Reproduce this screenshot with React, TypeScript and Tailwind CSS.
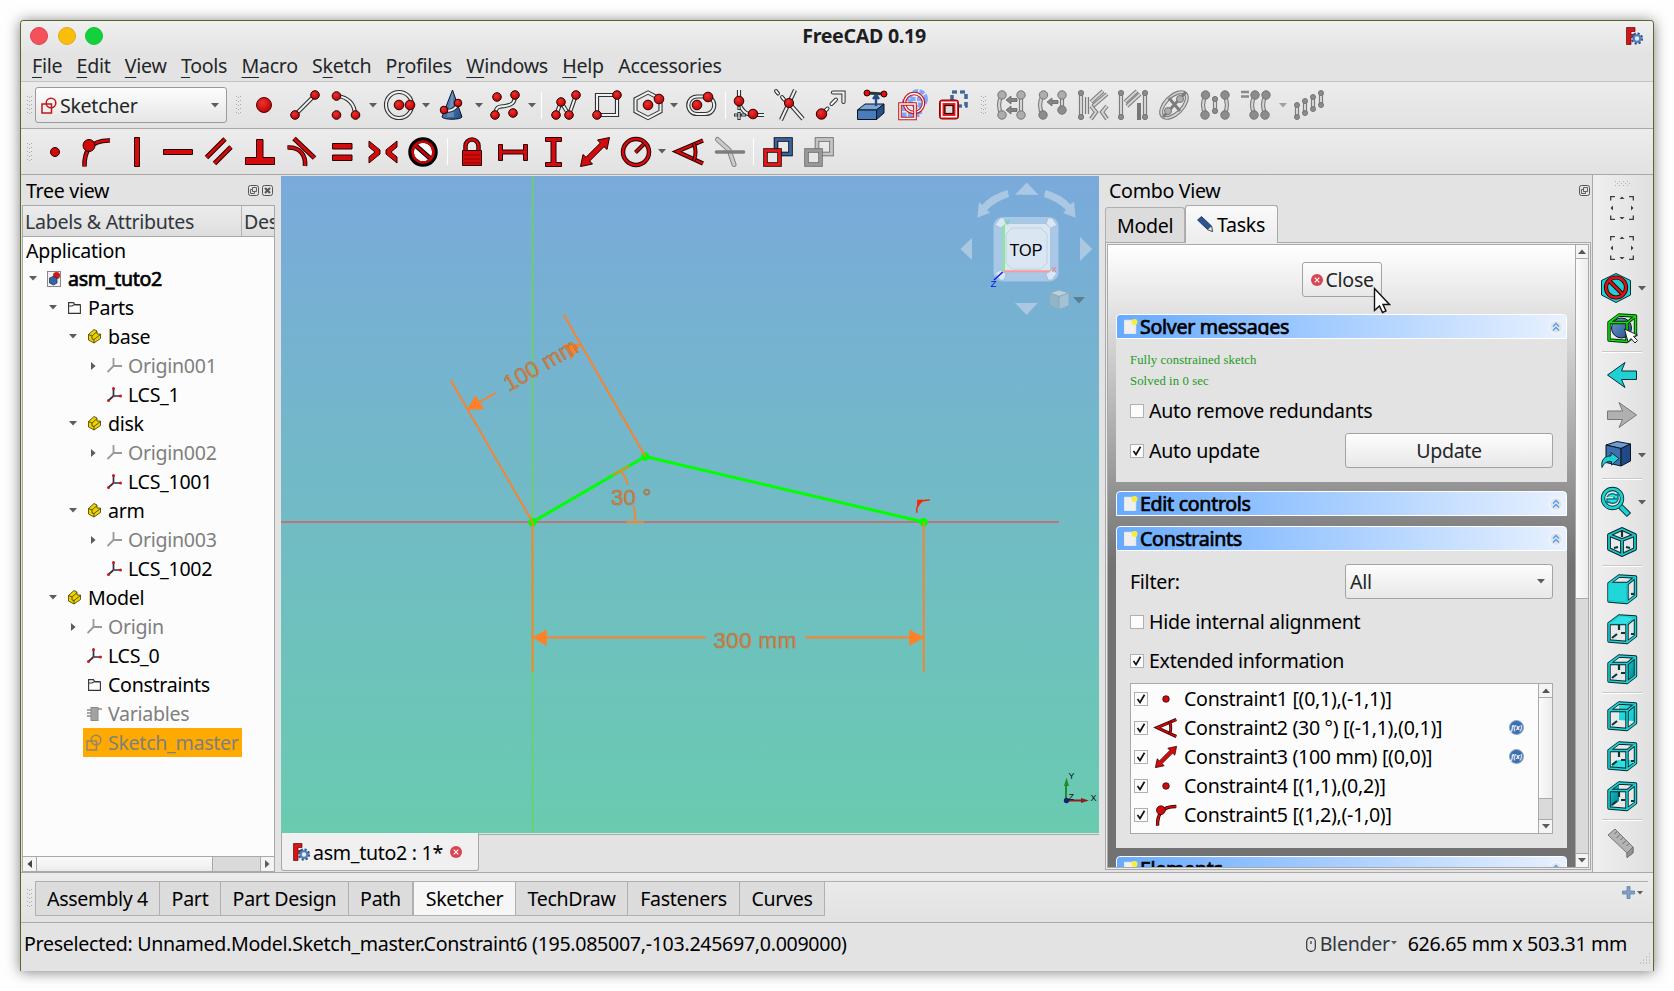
import React from "react";

type Kids = { children?: React.ReactNode };

/* ---------- drawing primitives ---------- */

function Ico({ children, s = 30 }: Kids & { s?: number }) {
  return (
    <svg width={s} height={s} viewBox="0 0 30 30" fill="none" className="shrink-0 overflow-visible">
      {children}
    </svg>
  );
}

function Tube({ d, dash, gray }: { d: string; dash?: string; gray?: boolean }) {
  return (
    <>
      <path d={d} stroke={gray ? "#7c7c7c" : "#2e3436"} strokeWidth="4.2" strokeDasharray={dash} />
      <path d={d} stroke={gray ? "#d4d4d4" : "#f1f1ef"} strokeWidth="2" strokeDasharray={dash} />
    </>
  );
}

function Dot({ x, y, r = 4.3 }: { x: number; y: number; r?: number }) {
  return <circle cx={x} cy={y} r={r} fill="url(#redDot)" stroke="#280000" strokeWidth="1" />;
}

function GDot({ x, y, r = 4.2, dark }: { x: number; y: number; r?: number; dark?: boolean }) {
  return <circle cx={x} cy={y} r={r} fill={dark ? "#8c8c8c" : "#adadad"} stroke="#757575" strokeWidth="1" />;
}

function Red({ d, w = 5.4 }: { d: string; w?: number }) {
  return (
    <>
      <path d={d} stroke="#280000" strokeWidth={w} />
      <path d={d} stroke="#d40b0b" strokeWidth={w - 2} />
    </>
  );
}

function Defs() {
  return (
    <svg width="0" height="0" className="absolute">
      <defs>
        <radialGradient id="redDot" cx="0.4" cy="0.35" r="0.7">
          <stop offset="0" stopColor="#f03030" />
          <stop offset="1" stopColor="#b80000" />
        </radialGradient>
        <linearGradient id="blueBox" x1="0" y1="0" x2="1" y2="1">
          <stop offset="0" stopColor="#729fcf" />
          <stop offset="1" stopColor="#204a87" />
        </linearGradient>
        <linearGradient id="tealFace" x1="0" y1="0" x2="1" y2="1">
          <stop offset="0" stopColor="#34e0e2" />
          <stop offset="1" stopColor="#16c8cc" />
        </linearGradient>
        <linearGradient id="tealDark" x1="0" y1="0" x2="1" y2="1">
          <stop offset="0" stopColor="#16d0d2" />
          <stop offset="1" stopColor="#067a80" />
        </linearGradient>
      </defs>
    </svg>
  );
}

/* ---------- geometry toolbar icons ---------- */

const GeoPoint = () => <Ico><circle cx="15" cy="15" r="7.5" fill="url(#redDot)" stroke="#500" strokeWidth="1" /></Ico>;
const GeoLine = () => <Ico><Tube d="M5 25 25 5" /><Dot x={5} y={25} /><Dot x={25} y={5} /></Ico>;
const GeoArc = () => <Ico><Tube d="M6 6C17 7 24 14 24 25" /><Dot x={5.5} y={6} /><Dot x={5.5} y={25} /><Dot x={24.5} y={25} /></Ico>;
const GeoCircle = () => <Ico><Tube d="M28 15a13 13 0 1 1-26 0a13 13 0 0 1 26 0" /><Dot x={15} y={15} r={4.8} /><Dot x={26} y={15} r={4.8} /></Ico>;
const GeoConic = () => (
  <Ico>
    <path d="M15.500 0 25 27C23 30 7 30 5 27Z" fill="url(#blueBox)" stroke="#0b1521" />
    <path d="M15.500 2 17 27H10Z" fill="#8fb4dd" opacity=".45" />
    <Tube d="M7 20C12 22 19 20 21 13" />
    <Dot x={7} y={20} r={3.8} /><Dot x={21} y={13} r={3.8} />
  </Ico>
);
const GeoSpline = () => <Ico><Tube d="M5 25C6 15 10 17 15 16C22 15 25 13 25 5" /><Dot x={7} y={7} /><Dot x={25} y={5} /><Dot x={5} y={25} /><Dot x={23} y={23} /></Ico>;
const GeoPolyline = () => <Ico><Tube d="M5 25 10 12 18 25 25 5" /><Dot x={5} y={25} /><Dot x={10} y={12} /><Dot x={18} y={25} /><Dot x={25} y={5} /></Ico>;
const GeoRect = () => <Ico><Tube d="M5 5H25V25H5Z" /><Dot x={25} y={5} /><Dot x={5} y={25} /></Ico>;
const GeoHex = () => <Ico><Tube d="M15 2.500 27.500 9V21.500L15 28 2.500 21.500V9Z" /><Dot x={15} y={15} r={4.8} /><Dot x={26} y={9} r={4.8} /></Ico>;
const GeoSlot = () => <Ico><Tube d="M11 6.500H19.500a8.500 8.500 0 0 1 0 17.500H11a8.500 8.500 0 0 1 0-17.500Z" /><Dot x={22} y={7} r={4.8} /><Dot x={11} y={15} r={4.8} /></Ico>;
const GeoFillet = () => (
  <Ico>
    <Tube d="M5 0V11C6 19 12 25 19 25H30" />
    <path d="M5 16v4m0 2v8M0 25h4m2 0h6" stroke="#2e3436" strokeWidth="3.200" />
    <path d="M5 17v2m0 4v6M1 25h2m5 0h3" stroke="#fff" strokeWidth="1.200" />
    <Dot x={5} y={11} r={4.8} /><Dot x={19} y={24} r={4.8} />
  </Ico>
);
const GeoTrim = () => (
  <Ico>
    <Tube d="M20 0 6 30" /><Tube d="M14 13 28 29" />
    <path d="M1 1 3 3.500M7 7 9 9.500" stroke="#2e3436" strokeWidth="4" strokeLinecap="round" />
    <path d="M1 1 3 3.500M7 7 9 9.500" stroke="#fff" strokeWidth="1.800" strokeLinecap="round" />
    <Dot x={14} y={13} r={4.600} />
  </Ico>
);
const GeoExtend = () => (
  <Ico>
    <g strokeLinecap="round">
      <path d="M9 21 11.500 18.500M15.500 14 20 9.500" stroke="#2e3436" strokeWidth="4" />
      <path d="M9 21 11.500 18.500M15.500 14 20 9.500" stroke="#fff" strokeWidth="2" />
      <path d="M17 2.500H27.500V12" stroke="#2e3436" strokeWidth="4.200" />
      <path d="M17 2.500H27.500V12" stroke="#f1f1ef" strokeWidth="2.200" />
    </g>
    <Dot x={5.500} y={24} r={5.200} />
  </Ico>
);

function Box3d() {
  return (
    <>
      <path d="M.500 20 8 14H27L19.500 20Z" fill="#7aa7d8" stroke="#0b1521" />
      <path d="M.500 20H19.500V29.500H.500Z" fill="#4a7cba" stroke="#0b1521" />
      <path d="M19.500 20 27 14V23L19.500 29.500Z" fill="#26508a" stroke="#0b1521" />
    </>
  );
}
const GeoExternal = () => (
  <Ico>
    <Box3d />
    <path d="M10 3 27 4" stroke="#2e3436" strokeWidth="3" />
    <path d="M19 5V16M16 9l3-4 3 4" stroke="#204a87" strokeWidth="2.400" />
    <circle cx="10" cy="3" r="3" fill="#e01010" stroke="#280000" /><circle cx="27" cy="4" r="3" fill="#e01010" stroke="#280000" />
  </Ico>
);
const GeoCarbon = () => (
  <Ico>
    <g stroke="#7fa6ff" strokeWidth="4" strokeDasharray="5 1.500"><circle cx="20" cy="9" r="8" /><path d="M6 9H22V25H6Z" /></g>
    <circle cx="16" cy="13" r="9.500" stroke="#c81414" strokeWidth="3.400" /><circle cx="16" cy="13" r="9.500" stroke="#fff" strokeWidth="1.300" />
    <path d="M2 14H17V28.500H2Z" stroke="#c81414" strokeWidth="3.600" /><path d="M2 14H17V28.500H2Z" stroke="#fff" strokeWidth="1.500" />
  </Ico>
);
const GeoConstruction = () => (
  <Ico>
    <path d="M13 2H27V16H13Z" stroke="#1d3f72" strokeWidth="3.200" strokeDasharray="5 3" />
    <path d="M13 2H27V16H13Z" stroke="#5f92d2" strokeWidth="1" strokeDasharray="5 3" />
    <rect x=".5" y="10" width="19" height="19" rx="2.500" fill="#e01818" stroke="#8c0000" />
    <rect x="2.800" y="12.300" width="14.400" height="14.400" stroke="#fff" strokeWidth="1.500" />
    <rect x="6" y="15.500" width="8" height="8" fill="#dcdcdc" stroke="#300" strokeWidth="1.200" />
  </Ico>
);

/* ---------- sketch tools (inactive) ---------- */

const T1 = () => <Ico><Tube gray d="M6 5Q0 15 6 25" /><Tube gray d="M25 5V25" /><path d="M10 10l5-4v2.500h6v3h-6V14ZM10 20l5-4v2.500h6v3h-6V24Z" fill="#858585" stroke="#666" strokeWidth=".8" /><GDot x={6} y={5} /><GDot x={25} y={5} /><GDot x={6} y={25} /><GDot x={25} y={25} /></Ico>;
const T2 = () => <Ico><Tube gray d="M6 5Q0 15 6 25" /><Tube gray d="M25 5V20" /><path d="M10 12l5-4v2.500h6v3h-6V16Z" fill="#858585" stroke="#666" strokeWidth=".8" /><GDot x={6.500} y={5} /><GDot x={25} y={5} /><GDot x={6} y={25} dark /><GDot x={25} y={20} dark /></Ico>;
const T3 = () => (
  <Ico>
    <Tube gray d="M3 3V27" /><GDot x={3} y={3} r={2.600} dark /><GDot x={3} y={27} r={2.600} dark />
    <Tube gray d="M9 7V24" />
    <Tube gray d="M13 12 25 1" /><Tube gray d="M15 16 29 4" />
    <Tube gray d="M13 16l5 6-5 7" /><Tube gray d="M29 16l-5 6 5 7" />
  </Ico>
);
const T4 = () => <Ico><Tube gray d="M3 3V27" /><Tube gray d="M27 3V27" /><Tube gray d="M7 12 19 1" /><Tube gray d="M9 16 22 4" /><path d="M21 13V30" stroke="#777" strokeWidth="4" /><GDot x={3} y={3} r={2.600} dark /><GDot x={3} y={27} r={2.600} dark /><GDot x={27} y={3} r={2.600} dark /><GDot x={27} y={27} r={2.600} dark /></Ico>;
const T5 = () => (
  <Ico>
    <g transform="rotate(45 15 15)"><ellipse cx="15" cy="15" rx="8.500" ry="16" stroke="#7c7c7c" strokeWidth="4" /><ellipse cx="15" cy="15" rx="8.500" ry="16" stroke="#d4d4d4" strokeWidth="1.800" /></g>
    <path d="M4 27 27 2M10 8 21 21" stroke="#7c7c7c" strokeWidth="3" /><GDot x={21} y={9} r={3.500} /><GDot x={9} y={21} r={3.500} />
  </Ico>
);
const T6 = () => <Ico><Tube gray d="M6 5Q0 15 6 25" /><Tube gray d="M24 5Q30 15 24 25" /><Tube gray d="M15 9V21" /><GDot x={5.500} y={5} dark /><GDot x={25} y={5} dark /><GDot x={5} y={25} dark /><GDot x={25} y={25} dark /><GDot x={15} y={9} r={2.600} dark /><GDot x={15} y={21} r={2.600} dark /></Ico>;
const T7 = () => <Ico><Tube gray d="M14 5Q8 15 14 25" /><Tube gray d="M25 5Q19 15 25 25" /><path d="M0 2H8M0 6.500H8" stroke="#8a8a8a" strokeWidth="2.600" /><GDot x={14} y={5} dark /><GDot x={25} y={5} dark /><GDot x={13} y={25} dark /><GDot x={24} y={25} dark /></Ico>;
const T8 = () => (
  <Ico>
    {[[3, 15, 27], [11, 11, 23], [19, 7, 19], [27, 3, 15]].map(([x, a, b]) => (
      <g key={x}><Tube gray d={`M${x} ${a}V${b}`} /><GDot x={x} y={a} r={2.500} dark /><GDot x={x} y={b} r={2.500} dark /></g>
    ))}
  </Ico>
);

/* ---------- constraint icons ---------- */

const CPoint = ({ s }: { s?: number }) => <Ico s={s}><circle cx="15" cy="15" r="4.500" fill="#d00b0b" stroke="#280000" /></Ico>;
const COn = ({ s }: { s?: number }) => <Ico s={s}><Red d="M3.500 29.500C3 16 8 3 29 3.500" w={4.600} /><circle cx="8" cy="8.500" r="6" fill="#d00b0b" stroke="#280000" /></Ico>;
const CVert = () => <Ico><path d="M12.500.500h5v29h-5z" fill="#d40b0b" stroke="#280000" /></Ico>;
const CHor = () => <Ico><path d="M.500 12.500h29v5H.500z" fill="#d40b0b" stroke="#280000" /></Ico>;
const CPar = () => <Ico><Red d="M2.500 20.500 21 2M10.500 26.500 27 10" w={4.800} /></Ico>;
const CPerp = () => <Ico><path d="M11.500 2.500h6.500v18h11.500v7H.500v-7h11Z" fill="#d40b0b" stroke="#280000" /></Ico>;
const CTan = () => <Ico><Red d="M8 1.500 28.500 21" w={5} /><Red d="M1.500 10.500C14 10 20 18 19 29" w={4.600} /></Ico>;
const CEq = () => <Ico><path d="M5.500 6.500h19.500v5.500H5.500zM5.500 18h19.500v5.500H5.500z" fill="#d40b0b" stroke="#280000" /></Ico>;
const CSym = () => <Ico><path d="M1 4v6l6 5-6 5v6l11-9v-4ZM29 4v6l-6 5 6 5v6l-11-9v-4Z" fill="#d40b0b" stroke="#280000" /></Ico>;
const CBlock = () => <Ico><circle cx="15" cy="15" r="12" fill="#fff" stroke="#000" strokeWidth="5.500" /><path d="M6 7 24 23" stroke="#000" strokeWidth="5" /><circle cx="15" cy="15" r="10.500" stroke="#c40606" strokeWidth="2.600" /><path d="M7 8 23 22" stroke="#c40606" strokeWidth="2.800" /></Ico>;
const CLock = () => (
  <Ico>
    <Red d="M8.500 14V9a6.500 6.500 0 0 1 13 0V14" w={4.500} />
    <path d="M5.500 13.500h19v15h-19z" fill="#d40b0b" stroke="#280000" /><path d="M7 18h16M7 22h16M7 26h16" stroke="#8d0505" />
  </Ico>
);
const CDistX = () => <Ico><path d="M.500 7.500h4v5.500h21V7.500h4v16h-4V17h-21v6.500h-4z" fill="#d40b0b" stroke="#280000" /></Ico>;
const CDistY = () => <Ico><path d="M6.500.500h16v4H17v21h5.500v4h-16v-4H12v-21H6.500z" fill="#d40b0b" stroke="#280000" /></Ico>;
const CDist = ({ s }: { s?: number }) => <Ico s={s}><path d="M29.500.500 27 12.500 24 9.700 9.700 24 12.500 27 .500 29.500 3 17.500 6 20.300 20.300 6 17.500 3Z" fill="#d40b0b" stroke="#280000" /></Ico>;
const CRad = () => <Ico><Red d="M28 15a13 13 0 1 1-26 0a13 13 0 0 1 26 0Z" w={4.500} /><Red d="M14.500 15.500 23 7" w={4} /></Ico>;
const CAng = ({ s }: { s?: number }) => <Ico s={s}><Red d="M29 3.500 3 14.500 29 26.500" w={4.400} /><Red d="M20 6.500Q23 15 20 23.500" w={4} /></Ico>;
const CSnell = () => <Ico><path d="M2.500 2.500 14 13 19 27.500" stroke="#7d7d7d" strokeWidth="5" strokeLinecap="round" /><path d="M2.500 2.500 14 13 19 27.500" stroke="#c9c9c9" strokeWidth="3.200" strokeLinecap="round" /><path d="M1.500 15H28.500" stroke="#7d7d7d" strokeWidth="3.600" strokeLinecap="round" /></Ico>;

function Squares({ a, b, o }: { a: string; b: string; o: string }) {
  return (
    <Ico>
      <rect x="13" y="2.500" width="14.500" height="14.500" stroke={o} strokeWidth="4.600" /><rect x="13" y="2.500" width="14.500" height="14.500" stroke={b} strokeWidth="2.800" />
      <rect x="2.500" y="13.500" width="14" height="14" fill="#e6e6e6" stroke={o} strokeWidth="4.600" /><rect x="2.500" y="13.500" width="14" height="14" stroke={a} strokeWidth="2.800" />
    </Ico>
  );
}

/* ---------- view toolbar icons ---------- */

const Frame = () => (
  <svg width="24" height="24" viewBox="0 0 24 24" fill="none" stroke="#3c3c3c" strokeWidth="1.300">
    <path d="M.700 4.500V.700H5M19 .700h4.300V4.500M23.300 19.500v3.800H19M5 23.300H.700V19.500" />
    <path d="M12 .500l2.500 2.500h-5ZM12 23.500l2.500-2.500h-5ZM.500 12l2.500-2.500v5ZM23.500 12l-2.500-2.500v5Z" fill="#3c3c3c" stroke="none" />
  </svg>
);
const DrawStyle = () => <Ico><path d="M15 .500 29.500 7.500V22L15 29.500.500 22V7.500Z" fill="#1fd0d4" stroke="#052f33" /><circle cx="15" cy="14.500" r="10" stroke="#280000" strokeWidth="4.200" /><path d="M8 7.500 22 21.500" stroke="#280000" strokeWidth="4.200" /><circle cx="15" cy="14.500" r="10" stroke="#d81414" strokeWidth="2.400" /><path d="M8 7.500 22 21.500" stroke="#d81414" strokeWidth="2.400" /></Ico>;

function Edges({ color, dark }: { color: string; dark: string }) {
  const d = "M2 9.500H20V28.500L2 27ZM2 9.500 12 2 28.500 3 20 10M28.500 3V22L20 28.500";
  return (
    <>
      <path d={d} stroke={dark} strokeWidth="3.400" strokeLinejoin="round" />
      <path d={d} stroke={color} strokeWidth="1.600" strokeLinejoin="round" />
    </>
  );
}
const BoxSel = () => (
  <Ico>
    <circle cx="14.500" cy="15" r="10" fill="url(#blueBox)" stroke="#0b1521" />
    <Edges color="#0be30b" dark="#042b04" />
    <path d="M17.500 16 21 29l3-3.500 4 4.500 2.500-2.500-4-4 4-1.500Z" fill="#fff" stroke="#222" />
  </Ico>
);
const Arrow = ({ f, s, flip }: { f: string; s: string; flip?: boolean }) => <Ico><path transform={flip ? "matrix(-1 0 0 1 30 0)" : undefined} d="M.500 15 18 2.500 14.500 11H29.500V19.500H14.500L18 27.500Z" fill={f} stroke={s} strokeLinejoin="round" /></Ico>;
const LinkNav = () => (
  <Ico>
    <path d="M5 5 16 1.500 29.500 4 20 8.500Z" fill="#6d9bd2" stroke="#0b1521" /><path d="M5 5 20 8.500V26L5 22.500Z" fill="#3f70ad" stroke="#0b1521" /><path d="M20 8.500 29.500 4V21L20 26Z" fill="#204a87" stroke="#0b1521" />
    <path d="M1 27.500C-.500 19 5 15.500 10 16V12.500L18 18.500 10.500 25V21.500C6 21 3 23 1 27.500Z" fill="#1fd0d4" stroke="#052f33" />
  </Ico>
);
const Zoomer = () => (
  <Ico>
    <path d="M18 18 28 28" stroke="#052f33" strokeWidth="6" /><path d="M18.500 18.500 27.300 27.300" stroke="#1fd0d4" strokeWidth="4" />
    <circle cx="11.500" cy="11.500" r="9.500" fill="#e8e8e8" stroke="#052f33" strokeWidth="4.400" /><circle cx="11.500" cy="11.500" r="9.500" stroke="#1fd0d4" strokeWidth="2.600" />
    <path d="M6 10c2-4 7-4 9-2l2-1v5h-5l1.500-2M17 13c-2 4-7 4-9 2l-2 1v-4h5" stroke="#067a80" strokeWidth="1.500" fill="#34e0e2" />
  </Ico>
);
const Iso = () => {
  const d = "M15 2 28 8V22L15 28 2 22V8ZM2 8 15 13 28 8M15 13V28";
  return <Ico><path d="M15 4V10M7 21l4-1M23 21l-4-1" stroke="#04383c" strokeWidth="2.200" /><path d={d} stroke="#04292c" strokeWidth="3.800" strokeLinejoin="round" /><path d={d} stroke="#1fc5c9" strokeWidth="1.800" strokeLinejoin="round" /></Ico>;
};
function ViewCube({ face }: { face: "front" | "top" | "right" | "rear" | "bottom" | "left" }) {
  return (
    <Ico>
      {face === "rear" && <path d="M12 3H28V20L12 19Z" fill="url(#tealFace)" />}
      {face === "bottom" && <path d="M2 27 11 19H28L20 28Z" fill="#2fe0e2" />}
      {face === "left" && <path d="M2 10 12 3V20L2 27Z" fill="url(#tealDark)" />}
      {face !== "front" && face !== "rear" && <path d="M12 11V16M14 19h4M5 24l5-4M24 20h4" stroke="#04383c" strokeWidth="2.200" />}
      {face === "rear" && <path d="M5 24l5-4" stroke="#04383c" strokeWidth="2.200" />}
      {face === "front" && <path d="M24 20h4" stroke="#04383c" strokeWidth="2.200" />}
      {face === "right" && <path d="M20 10 28 3V22L20 28Z" fill="url(#tealDark)" />}
      <Edges color="#1fd0d4" dark="#04292c" />
      {face === "front" && <path d="M1.500 9.500H19.500V28L1.500 26.500Z" fill="#1fd6d9" />}
      {face === "top" && <path d="M3 9.500 12.500 2.500 27.500 3.500 19.500 9.500Z" fill="#34e0e2" />}
    </Ico>
  );
}
const Ruler = () => <Ico><path d="M1 7 8 1 26 19V25L20 29.500V25Z" fill="#b4b4b4" stroke="#767676" /><path d="M10 3.500 7.500 6M13 6.500l-3.500 3.500M16 9.500 13.500 12M19 12.500l-3.500 3.500M22 15.500 19.500 18" stroke="#666" /><path d="M20 25 26 19V25L20 29.500Z" fill="#939393" stroke="#767676" /></Ico>;

/* ---------- small glyphs ---------- */

const Down = () => <svg width="8" height="5" viewBox="0 0 8 5" className="shrink-0"><path d="M0 0H8L4 4.600Z" fill="#5c5c5c" /></svg>;
const Right = () => <svg width="5" height="8" viewBox="0 0 5 8" className="shrink-0"><path d="M0 0V8L4.600 4Z" fill="#5c5c5c" /></svg>;
const Left = () => <svg width="5" height="8" viewBox="0 0 5 8" className="shrink-0"><path d="M5 0V8L.400 4Z" fill="#444" /></svg>;
const Up = () => <svg width="8" height="5" viewBox="0 0 8 5" className="shrink-0"><path d="M0 5H8L4 .400Z" fill="#555" /></svg>;

const Float = () => <svg width="11" height="11" viewBox="0 0 11 11" fill="none" stroke="#555"><rect x=".5" y=".5" width="10" height="10" rx="2" /><path d="M4.500 2.500h4v4h-4zM4.500 4.500h-2v4h4v-2" strokeWidth=".9" /></svg>;
const CloseBox = () => <svg width="11" height="11" viewBox="0 0 11 11" fill="none" stroke="#555"><rect x=".5" y=".5" width="10" height="10" rx="2" /><path d="M3 3l5 5M8 3l-5 5" strokeWidth="2" /></svg>;
const RedClose = () => <svg width="12" height="12" viewBox="0 0 12 12" fill="none"><circle cx="6" cy="6" r="6" fill="#da4453" /><path d="M3.700 3.700l4.600 4.600M8.300 3.700l-4.600 4.600" stroke="#fff" strokeWidth="1.100" /></svg>;

const Logo = () => (
  <svg width="17" height="18" viewBox="0 0 17 18">
    <path d="M.500.500H9V4.500H5V7.500H8V10.500H5V17.500H.500Z" fill="#d81414" stroke="#5a0a0a" strokeWidth=".7" />
    <circle cx="11" cy="11.500" r="4.600" fill="none" stroke="#2b4f86" strokeWidth="3" strokeDasharray="2 1.600" />
    <circle cx="11" cy="11.500" r="3.400" fill="none" stroke="#4f7fc0" strokeWidth="2.400" />
  </svg>
);

const SketchGlyph = ({ c }: { c: string }) => (
  <svg width="16" height="17" viewBox="0 0 16 17" fill="none" stroke={c} strokeWidth="1.500"><path d="M1 7H10.500V16H1Z" /><circle cx="10" cy="6" r="4.800" /></svg>
);

function Grip() {
  return (
    <svg width="5" height="18" viewBox="0 0 5 18" className="shrink-0">
      {[0, 4, 8, 12, 16].map((y) => <path key={y} d={`M0 ${y}.500h1M4 ${y}.500h1M2 ${y + 1}.500h1`} stroke="#a8a8a8" />)}
    </svg>
  );
}

/* ---------- tool bars ---------- */

const Cell = ({ children }: Kids) => <div className="flex w-[40.900px] shrink-0 items-center justify-center">{children}</div>;
const Drop = ({ light }: { light?: boolean }) => <div className={light ? "flex w-[12.100px] shrink-0 items-center justify-center opacity-50" : "flex w-[12.100px] shrink-0 items-center justify-center"}><Down /></div>;
const Sep = () => <div className="mx-[3.400px] h-[27px] w-px shrink-0 border-r border-white bg-[#c4c4c4]" />;

function Menu({ pre, k, post }: { pre?: string; k?: string; post: string }) {
  return <span>{pre}{k && <span className="underline decoration-1 underline-offset-[4px]">{k}</span>}{post}</span>;
}

function Toolbars() {
  return (
    <>
      <div className="flex h-[47px] items-center border-b border-[#a9a9a9] bg-gradient-to-b from-[#ececec] to-[#e2e2e2]">
        <div className="ml-[6px]"><Grip /></div>
        <div className="ml-[3px] flex h-[36px] w-[192px] items-center rounded-[3px] border border-[#9b9b9b] bg-gradient-to-b from-[#fdfdfd] to-[#e6e6e6] pl-[5px] pr-[7px] text-[#232629]">
          <SketchGlyph c="#c01a1a" /><span className="ml-[3px] flex-1 pt-px">Sketcher</span><Down />
        </div>
        <div className="ml-[9px]"><Grip /></div>
        <div className="ml-[3px] flex items-center">
          <Cell><GeoPoint /></Cell><Cell><GeoLine /></Cell><Cell><GeoArc /></Cell><Drop />
          <Cell><GeoCircle /></Cell><Drop /><Cell><GeoConic /></Cell><Drop /><Cell><GeoSpline /></Cell><Drop /><Sep />
          <Cell><GeoPolyline /></Cell><Cell><GeoRect /></Cell><Cell><GeoHex /></Cell><Drop /><Cell><GeoSlot /></Cell><Sep />
          <Cell><GeoFillet /></Cell><Cell><GeoTrim /></Cell><Cell><GeoExtend /></Cell><Cell><GeoExternal /></Cell><Cell><GeoCarbon /></Cell><Cell><GeoConstruction /></Cell>
        </div>
        <div className="ml-[7px]"><Grip /></div>
        <div className="ml-[4px] flex items-center">
          <Cell><T1 /></Cell><Cell><T2 /></Cell><Cell><T3 /></Cell><Cell><T4 /></Cell><Cell><T5 /></Cell><Cell><T6 /></Cell><Cell><T7 /></Cell><Drop light /><Cell><T8 /></Cell>
        </div>
      </div>
      <div className="flex h-[46px] items-center border-b border-[#a9a9a9] bg-gradient-to-b from-[#ececec] to-[#e2e2e2]">
        <div className="ml-[6px]"><Grip /></div>
        <div className="ml-[3px] flex items-center">
          <Cell><CPoint /></Cell><Cell><COn /></Cell><Cell><CVert /></Cell><Cell><CHor /></Cell><Cell><CPar /></Cell><Cell><CPerp /></Cell><Cell><CTan /></Cell><Cell><CEq /></Cell><Cell><CSym /></Cell><Cell><CBlock /></Cell><Sep />
          <Cell><CLock /></Cell><Cell><CDistX /></Cell><Cell><CDistY /></Cell><Cell><CDist /></Cell><Cell><CRad /></Cell><Drop /><Cell><CAng /></Cell><Cell><CSnell /></Cell><Sep />
          <Cell><Squares a="#f01414" b="#3465a4" o="#1a0808" /></Cell><Cell><Squares a="#999" b="#c4c4c4" o="#6e6e6e" /></Cell>
        </div>
      </div>
    </>
  );
}

/* ---------- tree ---------- */

type IconKind = "doc" | "folder" | "part" | "origin" | "lcs" | "var" | "sketch";

function TreeIcon({ kind }: { kind: IconKind }) {
  switch (kind) {
    case "doc":
      return <svg width="14" height="16" viewBox="0 0 14 16"><rect x=".5" y=".5" width="13" height="15" fill="#f2f2f2" stroke="#888" /><circle cx="9.500" cy="4.500" r="3.500" fill="#d01818" /><path d="M2.500 7 6 5.500 10 7V12L6.500 14 2.500 12Z" fill="#3465a4" stroke="#1b2f4e" strokeWidth=".7" /></svg>;
    case "folder":
      return <svg width="13" height="12" viewBox="0 0 13 12" fill="none" stroke="#333" strokeWidth="1.100"><path d="M.600.600H5.500L7 3H12.400V11.400H.600Z" /><path d="M.600 4H4L6.500 2.500H12.400" /></svg>;
    case "part":
      return <svg width="13" height="15" viewBox="0 0 13 15" strokeLinejoin="round" stroke="#3d3600" strokeWidth=".8"><path d="M.500 5.500 6 .500 9 2V5L12.500 5V9.500L6 14 .500 11Z" fill="#edd400" /><path d="M.500 5.500 4 7V10L6 10.500V14M4 7 9 2.500M6 10.500 12.500 5.500" fill="none" /></svg>;
    case "origin":
      return <svg width="15" height="15" viewBox="0 0 15 15" stroke="#999" strokeWidth="1.800" fill="none"><path d="M6.500 0V8H15M6.500 8 .500 14" /></svg>;
    case "lcs":
      return <svg width="15" height="15" viewBox="0 0 15 15" fill="none"><path d="M6.500 1V9H14M6.500 9 1.500 13.500" stroke="#26364e" strokeWidth="1.700" /><g fill="#d01818"><circle cx="6.500" cy="1.500" r="1.500" /><circle cx="13.500" cy="9" r="1.500" /><circle cx="1.500" cy="13.500" r="1.500" /><circle cx="6.500" cy="9" r="1" /></g></svg>;
    case "var":
      return <svg width="15" height="14" viewBox="0 0 15 14"><rect x="4" y=".5" width="7" height="13" fill="#a2a2a2" stroke="#8a8a8a" /><path d="M0 3h4M0 6h4M0 9h4M11 2h4" stroke="#8a8a8a" strokeWidth="1.300" /></svg>;
    case "sketch":
      return <SketchGlyph c="#97856a" />;
  }
}

type Node = { d: number; t: string; k: IconKind; open?: boolean; closed?: boolean; dim?: boolean; sel?: boolean; bold?: boolean };
const nodes: Node[] = [
  { d: 0, t: "asm_tuto2", k: "doc", open: true, bold: true },
  { d: 1, t: "Parts", k: "folder", open: true },
  { d: 2, t: "base", k: "part", open: true },
  { d: 3, t: "Origin001", k: "origin", closed: true, dim: true },
  { d: 3, t: "LCS_1", k: "lcs" },
  { d: 2, t: "disk", k: "part", open: true },
  { d: 3, t: "Origin002", k: "origin", closed: true, dim: true },
  { d: 3, t: "LCS_1001", k: "lcs" },
  { d: 2, t: "arm", k: "part", open: true },
  { d: 3, t: "Origin003", k: "origin", closed: true, dim: true },
  { d: 3, t: "LCS_1002", k: "lcs" },
  { d: 1, t: "Model", k: "part", open: true },
  { d: 2, t: "Origin", k: "origin", closed: true, dim: true },
  { d: 2, t: "LCS_0", k: "lcs" },
  { d: 2, t: "Constraints", k: "folder" },
  { d: 2, t: "Variables", k: "var", dim: true },
  { d: 2, t: "Sketch_master", k: "sketch", dim: true, sel: true },
];
const indent = ["pl-0", "pl-5", "pl-10", "pl-[60px]"];

function TreeDock() {
  return (
    <div className="flex w-[260px] shrink-0 flex-col pl-px pt-px">
      <div className="flex h-[29px] items-center pl-[4px] text-black">
        <span className="flex-1">Tree view</span>
        <div className="mr-[8px] flex gap-[3px]"><Float /><CloseBox /></div>
      </div>
      <div className="flex h-[667px] w-[253px] flex-col border border-[#a9a9a9] bg-[#fcfcfc]">
        <div className="flex h-[31px] shrink-0 border-b border-[#a9a9a9] bg-gradient-to-b from-[#ececec] to-[#dedede] text-[#31363b]">
          <div className="flex w-[219px] items-center border-r border-[#b5b5b5] pl-[2px] pt-px">Labels &amp; Attributes</div>
          <div className="flex flex-1 items-center overflow-hidden pl-[2px] pt-px">Des</div>
        </div>
        <div className="flex h-[27px] items-center pl-[3px] text-black">Application</div>
        <div className="flex flex-1 flex-col text-black">
          {nodes.map((n) => (
            <div key={n.t} className={`flex h-[29px] items-center ${indent[n.d]}`}>
              <div className="flex w-5 justify-center">{n.open && <Down />}{n.closed && <Right />}</div>
              <div className={n.sel ? "flex h-[29px] items-center bg-[#ffaa00] pr-[3px]" : "flex h-[29px] items-center"}>
                <div className="flex w-[22px] justify-center"><TreeIcon kind={n.k} /></div>
                <span className={n.bold ? "ml-[3px] [-webkit-text-stroke:0.700px_#000]" : n.dim ? "ml-[3px] text-[#7f7f7f]" : "ml-[3px]"}>{n.t}</span>
              </div>
            </div>
          ))}
        </div>
        <div className="flex h-[15px] shrink-0 border-t border-[#a9a9a9] bg-[#dadada]">
          <div className="flex w-[14px] items-center justify-center border-r border-[#a9a9a9] bg-[#f4f4f4]"><Left /></div>
          <div className="w-[176px] border-r border-[#a9a9a9] bg-gradient-to-b from-[#fbfbfb] to-[#ececec]" />
          <div className="flex-1" />
          <div className="flex w-[14px] items-center justify-center border-l border-[#a9a9a9] bg-[#f4f4f4]"><Right /></div>
        </div>
      </div>
    </div>
  );
}

/* ---------- 3D view ---------- */

function NavCube() {
  return (
    <g>
      <g fill="#b3cde4" fillOpacity=".85">
        <path d="M745.700 6.500 757.500 18.700H734Z" />
        <path d="M679.300 73 691 62V84Z" />
        <path d="M811.300 73 799 60.700V85Z" />
        <path d="M745.700 139 734 127H756.500Z" />
        <path d="M726.700 14 728 21Q715 25 706 34L709 36.700 696.300 41.700 698 26 701 29Q711 18 726.700 14Z" />
        <path d="M764.500 14 763 21Q776 25 785 34L782 37 794.700 41.700 793 25.500 789.500 28.500Q780 18 764.500 14Z" />
      </g>
      <rect x="712.500" y="41" width="65" height="64.500" rx="9" fill="#a9c8e5" />
      <rect x="722" y="48" width="47" height="48" fill="#dae6f2" />
      <g fill="#d9e7f5" stroke="#8fb6da" strokeWidth=".6">
        <path d="M714 49l5-7h4l2 6-5 4Z" /><path d="M776 49l-5-7h-4l-2 6 5 4Z" /><path d="M714 97l5 7h4l2-6-5-4Z" /><path d="M776 97l-5 7h-4l-2-6 5-4Z" />
      </g>
      <path d="M731 52H760L766 58V87L760 93H731L725 87V58Z" fill="#dae6f2" stroke="#bcd2e6" strokeWidth="1" />
      <path d="M723 49V96" stroke="#86ee86" strokeWidth="2" />
      <path d="M723 95.300H769" stroke="#fb9a9a" strokeWidth="2" />
      <path d="M721.700 96 713 104" stroke="#1a1ae6" strokeWidth="1.500" />
      <text x="745" y="80" textAnchor="middle" fontSize="16.200" fill="#000">TOP</text>
      <text x="726.700" y="49" textAnchor="middle" fontSize="7" fill="#4ade4a">Y</text>
      <text x="773.500" y="96" textAnchor="middle" fontSize="8" fill="#fb7070">X</text>
      <text x="712.500" y="111" textAnchor="middle" fontSize="9.500" fill="#0a0ae6">Z</text>
      <g stroke="#86a8bd" strokeWidth=".8">
        <path d="M768.500 117 778 114 788 117 778 120.500Z" fill="#b9d0de" /><path d="M768.500 117 778 120.500V133.500L768.500 129.500Z" fill="#92b4c8" /><path d="M788 117 778 120.500V133.500L788 129.500Z" fill="#a3c2d3" />
      </g>
      <path d="M792 121H804L798 127.500Z" fill="#587f92" />
    </g>
  );
}

function View3d() {
  return (
    <svg width="818" height="657" viewBox="0 0 818 657" fill="none" className="block [font-family:'Liberation_Sans',Arial,sans-serif] tracking-normal">
      <defs>
        <linearGradient id="sky" x1="0" y1="0" x2="0" y2="1"><stop offset="0" stopColor="#7aaadb" /><stop offset="1" stopColor="#69cbb0" /></linearGradient>
      </defs>
      <rect width="818" height="657" fill="url(#sky)" />
      <path d="M251.500 0V657" stroke="#6ad06a" strokeWidth="1.700" />
      <path d="M0 346H778" stroke="#d65f62" strokeWidth="1.700" />
      <path d="M251.500 346 364.300 280.500 642.600 346" stroke="#00ff00" strokeWidth="3" />
      <g fill="#00ff00"><circle cx="251.500" cy="346.300" r="4.200" /><circle cx="364.300" cy="280.500" r="4.200" /><circle cx="642.600" cy="346.300" r="4.200" /></g>
      <g stroke="#ff8026" strokeWidth="1.800">
        <path d="M169.600 204 251.500 346V495.700M282.500 138.300 364.300 280.500M642.800 346V495.700" />
        <path d="M190 231 214.600 217M252 461.500H424.500M524.500 461.500H642" />
        <path d="M353.900 346Q354 337 352.900 330M347 309Q344.500 301 340.300 295M332 299 348 290M345.500 346H362.700" />
      </g>
      <g fill="#ff8026">
        <path d="M186.200 233.500 194.500 219.300 203 233.500ZM299.500 168 282.500 168 290.500 183.500ZM251.500 461.500 265.700 453.500V470ZM643 461.500 628.300 453.500V470Z" />
      </g>
      <g fill="#ee7f35" stroke="#8f7a5c" strokeWidth=".6" fontSize="22.600">
        <text x="432.500" y="471.800" textLength="83">300 mm</text>
        <text x="330" y="329">30 °</text>
        <text transform="translate(228 216) rotate(-30)">100 mm</text>
      </g>
      <path d="M635.800 336.700V332Q637 331 637 324.500H643.500L648.700 324" stroke="#ff2200" strokeWidth="1.400" />
      <path d="M636.500 324.500H643.500Q638.500 327 637 332Z" fill="#ff2200" />
      <NavCube />
      <path d="M785 624V606" stroke="#1f8a2e" strokeWidth="2" /><path d="M785.500 601.500 788 610H783Z" fill="#1f8a2e" />
      <path d="M785 624.500H802" stroke="#8a2020" strokeWidth="2" /><path d="M808 624.500 800 622V627Z" fill="#8a2020" />
      <circle cx="785.500" cy="624.500" r="2.700" fill="#16206e" />
      <g fontSize="9" fill="#111"><text x="787.500" y="602.500">Y</text><text x="809.500" y="625">X</text><text x="787.500" y="624">Z</text></g>
    </svg>
  );
}

function Center() {
  return (
    <div className="flex w-[818px] shrink-0 flex-col pt-px">
      <View3d />
      <div className="flex">
        <div className="flex h-[38px] w-[197.500px] items-center rounded-b-[3px] border border-t-0 border-[#a9a9a9] bg-[#f0f0f0] pl-[11px] text-black">
          <Logo /><span className="ml-[3px] pt-[2px]">asm_tuto2 : 1*</span><div className="ml-[7px] pt-px"><RedClose /></div>
        </div>
        <div className="mt-px h-px flex-1 bg-[#a9a9a9]" />
      </div>
    </div>
  );
}

/* ---------- combo view ---------- */

function Check({ on }: { on?: boolean }) {
  return (
    <div className="flex h-[14px] w-[14px] shrink-0 items-center justify-center border border-[#b0b0b0] bg-[#fcfcfc]">
      {on && <svg width="10" height="10" viewBox="0 0 10 10" fill="none"><path d="M1.500 5 4 8.500 8.500.800" stroke="#111" strokeWidth="1.700" /></svg>}
    </div>
  );
}

function PanelHead({ t }: { t: string }) {
  return (
    <div className="flex h-[25px] shrink-0 items-center overflow-hidden rounded-t-[4px] border border-white bg-gradient-to-r from-[#66aaff] to-[#e8f1ff] pl-[7px] pr-[3px] text-black">
      <svg width="14" height="15" viewBox="0 0 14 15" className="shrink-0"><rect x="0" y="1" width="12" height="14" fill="#efefef" stroke="#cfd3d8" strokeWidth=".6" /><circle cx="10.500" cy="3" r="3" fill="#f5ee3c" /></svg>
      <span className="ml-[2px] h-[20px] flex-1 self-start overflow-hidden leading-[23px] [-webkit-text-stroke:0.700px_#000]">{t}</span>
      <svg width="14" height="14" viewBox="0 0 14 14" fill="none"><circle cx="7" cy="7" r="6.500" fill="#e3e5e8" stroke="#f8f8f8" /><path d="M4 6.500 7 3.500l3 3M4 10.500l3-3 3 3" stroke="#4a9bf5" strokeWidth="1.300" /></svg>
    </div>
  );
}

function Btn({ children, className }: Kids & { className: string }) {
  return <div className={`flex h-[35px] items-center rounded-[3px] border border-[#a3a3a3] bg-gradient-to-b from-[#fdfdfd] to-[#e8e8e8] text-[#232629] ${className}`}>{children}</div>;
}

const constraints = [
  { t: "Constraint1 [(0,1),(-1,1)]", i: <CPoint s={22} /> },
  { t: "Constraint2 (30 °) [(-1,1),(0,1)]", i: <CAng s={22} />, fx: true },
  { t: "Constraint3 (100 mm) [(0,0)]", i: <CDist s={22} />, fx: true },
  { t: "Constraint4 [(1,1),(0,2)]", i: <CPoint s={22} /> },
  { t: "Constraint5 [(1,2),(-1,0)]", i: <COn s={22} /> },
];

function TaskPanel() {
  return (
    <div className="flex w-[467px] flex-col overflow-hidden bg-[linear-gradient(to_bottom,#ffffff_0px,#727272_320px)] px-2 pt-[17px]">
      <div className="relative flex w-20 self-center">
        <Btn className="w-20 pl-[8px]"><RedClose /><span className="ml-[3px]">Close</span></Btn>
        <svg width="18" height="28" viewBox="0 0 18 28" className="absolute left-[71px] top-[25px]"><path d="M1.500 1.500V23.500L6.500 19 9.500 25.500 13 24 10 17.500H16.500Z" fill="#fff" stroke="#111" strokeWidth="1.400" /></svg>
      </div>
      <div className="mt-[17px] flex shrink-0 flex-col">
        <PanelHead t="Solver messages" />
        <div className="h-[143px] bg-[#e3e3e3] px-[14px] pt-[11px] text-black">
          <div className="text-[12.700px] leading-[21px] tracking-[0.100px] text-[#1d9a1d] [font-family:'Liberation_Serif',serif]">Fully constrained sketch<br />Solved in 0 sec</div>
          <div className="mt-[7px] flex h-6 items-center gap-[5px]"><Check /><span>Auto remove redundants</span></div>
          <div className="mt-[10px] flex h-[35px] items-center gap-[5px]"><Check on /><span className="flex-1">Auto update</span><Btn className="w-[208px] justify-center">Update</Btn></div>
        </div>
      </div>
      <div className="mt-[9px] flex shrink-0 flex-col"><PanelHead t="Edit controls" /></div>
      <div className="mt-[10px] flex shrink-0 flex-col">
        <PanelHead t="Constraints" />
        <div className="h-[297px] bg-[#e3e3e3] px-[14px] pt-[13px] text-black">
          <div className="flex items-center"><span className="flex-1">Filter:</span><Btn className="w-[208px] pl-[4px] pr-[7px]"><span className="flex-1">All</span><Down /></Btn></div>
          <div className="mt-[11px] flex h-6 items-center gap-[5px]"><Check /><span>Hide internal alignment</span></div>
          <div className="mt-[15px] flex h-6 items-center gap-[5px]"><Check on /><span>Extended information</span></div>
          <div className="mt-[10px] flex h-[151px] border border-[#a9a9a9] bg-[#fcfcfc]">
            <div className="flex flex-1 flex-col pl-[3px]">
              {constraints.map((c) => (
                <div key={c.t} className="flex h-[29px] items-center">
                  <Check on /><div className="ml-[7px] flex">{c.i}</div><span className="ml-[7px] flex-1 whitespace-nowrap">{c.t}</span>
                  {c.fx && <svg width="15" height="15" viewBox="0 0 15 15" className="mr-[14px] tracking-normal"><circle cx="7.500" cy="7.500" r="7" fill="#3d6fb0" stroke="#8ba9cf" /><text x="7.500" y="10" textAnchor="middle" fontSize="7" fontStyle="italic" fontWeight="bold" fill="#fff">f(x)</text></svg>}
                </div>
              ))}
            </div>
            <div className="flex w-[14px] flex-col border-l border-[#a9a9a9] bg-[#dadada]">
              <div className="flex h-[14px] items-center justify-center border-b border-[#a9a9a9] bg-[#f4f4f4]"><Up /></div>
              <div className="h-[101px] border-b border-[#a9a9a9] bg-gradient-to-r from-[#fbfbfb] to-[#ececec]" />
              <div className="flex-1" />
              <div className="flex h-[14px] items-center justify-center border-t border-[#a9a9a9] bg-[#f4f4f4]"><Down /></div>
            </div>
          </div>
        </div>
      </div>
      <div className="mt-[8px] flex shrink-0 flex-col"><PanelHead t="Elements" /></div>
    </div>
  );
}

function Combo() {
  return (
    <div className="flex w-[493px] shrink-0 flex-col pl-[6px] pt-px text-black">
      <div className="flex h-[29px] shrink-0 items-center pl-[4px]"><span className="flex-1">Combo View</span><div className="mr-[2px]"><Float /></div></div>
      <div className="flex h-[37px] shrink-0 items-end">
        <div className="flex h-[35px] w-[80px] items-center rounded-t-[3px] border border-b-0 border-[#b0b0b0] bg-[#dcdcdc] pl-[11px] pt-px">Model</div>
        <div className="z-10 -mb-px flex h-[38px] w-[93px] items-center rounded-t-[3px] border border-b-0 border-[#a9a9a9] bg-gradient-to-b from-[#fafafa] to-[#ececec] pl-[11px]">
          <svg width="17" height="17" viewBox="0 0 17 17"><path d="M.500 4 4.500.500 14.500 10 15.500 15.500 10.500 13.500Z" fill="#2c5490" stroke="#14294a" strokeWidth=".8" /><path d="M14.500 10 15.500 15.500 10.500 13.500Z" fill="#eee" stroke="#333" strokeWidth=".6" /></svg>
          <span className="ml-[3px]">Tasks</span>
        </div>
      </div>
      <div className="flex h-[628px] w-[486px] shrink-0 border border-[#a9a9a9] bg-[#ececec] p-px">
        <div className="flex flex-1 overflow-hidden border border-[#a9a9a9]">
          <TaskPanel />
          <div className="flex flex-1 flex-col border-l border-[#a9a9a9] bg-[#dadada]">
            <div className="flex h-[14px] shrink-0 items-center justify-center border-b border-[#a9a9a9] bg-[#f4f4f4]"><Up /></div>
            <div className="h-[340px] shrink-0 border-b border-[#a9a9a9] bg-gradient-to-r from-[#fbfbfb] to-[#ececec]" />
            <div className="flex-1" />
            <div className="flex h-[14px] shrink-0 items-center justify-center border-t border-[#a9a9a9] bg-[#f4f4f4]"><Down /></div>
          </div>
        </div>
      </div>
    </div>
  );
}

/* ---------- right bar ---------- */

function RItem({ children, drop }: Kids & { drop?: boolean }) {
  return (
    <div className="flex h-10 items-center">
      <div className={drop ? "ml-[8px] flex w-[30px] justify-center" : "ml-[14px] flex w-[30px] justify-center"}>{children}</div>
      {drop && <div className="ml-[7px]"><Down /></div>}
    </div>
  );
}

const HSep = () => <div className="my-[2.500px] ml-[9px] h-[2px] w-10 shrink-0 border-b border-white bg-[#c9c9c9]" />;

function RightBar() {
  return (
    <div className="flex flex-1 flex-col border-l border-[#a9a9a9] bg-gradient-to-r from-[#efefef] to-[#e0e0e0]">
      <svg width="17" height="5" viewBox="0 0 17 5" className="ml-[22px] mt-[6px]">{[0, 4, 8, 12].map((x) => <path key={x} d={`M${x} .500h1M${x + 2} 2.500h1M${x} 4.500h1`} stroke="#b0b0b0" />)}</svg>
      <div className="h-[2px]" />
      <RItem><Frame /></RItem><RItem><Frame /></RItem><RItem drop><DrawStyle /></RItem><RItem><BoxSel /></RItem>
      <HSep />
      <RItem><Arrow f="#1fd0d4" s="#052f33" /></RItem><RItem><Arrow f="#b0b0b0" s="#777" flip /></RItem><RItem drop><LinkNav /></RItem>
      <HSep />
      <RItem drop><Zoomer /></RItem><RItem><Iso /></RItem>
      <HSep />
      <RItem><ViewCube face="front" /></RItem><RItem><ViewCube face="top" /></RItem><RItem><ViewCube face="right" /></RItem>
      <HSep />
      <RItem><ViewCube face="rear" /></RItem><RItem><ViewCube face="bottom" /></RItem><RItem><ViewCube face="left" /></RItem>
      <HSep />
      <RItem><Ruler /></RItem>
    </div>
  );
}

/* ---------- window ---------- */

const benches: [string, string][] = [
  ["Assembly 4", "w-[125px]"], ["Part", "w-[61px]"], ["Part Design", "w-[128px]"], ["Path", "w-[64px]"],
  ["Sketcher", "w-[103px]"], ["TechDraw", "w-[112px]"], ["Fasteners", "w-[112px]"], ["Curves", "w-[85px]"],
];

export default function App() {
  return (
    <div className="h-[991px] w-[1674px] overflow-hidden bg-[#fefefe] pl-5 pt-5 text-[19.600px] leading-6 tracking-[-0.300px] [font-family:'Noto_Sans',sans-serif]">
      <Defs />
      <div className="flex h-[951px] w-[1634px] flex-col rounded-t-[4px] border border-b-0 border-[#55692f] bg-[#e3e3e3] shadow-[0_1px_14px_rgba(0,0,0,0.500)]">
        <div className="flex h-8 shrink-0 items-center rounded-t-[3px] bg-gradient-to-b from-[#f0f0f0] to-[#e4e4e4] pb-[3px] pl-[9px] pr-[10px]">
          <div className="flex w-[100px] gap-[9.500px]">
            <div className="h-[18px] w-[18px] rounded-full border border-[#e0404c] bg-[#f5515b]" />
            <div className="h-[18px] w-[18px] rounded-full border border-[#e0a81a] bg-[#fbbe08]" />
            <div className="h-[18px] w-[18px] rounded-full border border-[#14c535] bg-[#13d13c]" />
          </div>
          <div className="flex-1 pr-[28px] text-center font-bold text-[#1c1e20]">FreeCAD 0.19</div>
          <Logo />
        </div>
        <div className="flex h-[29px] shrink-0 items-center gap-[14.400px] border-b border-[#c2c2c2] pb-[2px] pl-[11px] text-[#232629]">
          <Menu k="F" post="ile" /><Menu k="E" post="dit" /><Menu k="V" post="iew" /><Menu k="T" post="ools" /><Menu k="M" post="acro" />
          <Menu pre="S" k="k" post="etch" /><Menu pre="P" k="r" post="ofiles" /><Menu k="W" post="indows" /><Menu k="H" post="elp" /><Menu post="Accessories" />
        </div>
        <Toolbars />
        <div className="flex h-[698px] shrink-0 border-b border-[#a9a9a9]">
          <TreeDock />
          <Center />
          <Combo />
          <RightBar />
        </div>
        <div className="flex h-[50px] shrink-0 items-center border-b border-[#a9a9a9] bg-gradient-to-b from-[#ececec] to-[#e2e2e2] pl-[6px] pt-px text-black">
          <Grip />
          <div className="ml-[3px] flex h-[35px]">
            {benches.map(([b, w]) => (
              <div key={b} className={b === "Sketcher" ? `flex items-center justify-center border border-[#b0b0b0] bg-[#f6f6f6] pt-px ${w}` : `flex items-center justify-center border border-l-0 border-[#b0b0b0] bg-[#dcdcdc] pt-px first:border-l ${w}`}>{b}</div>
            ))}
          </div>
          <div className="mr-[5px] flex h-[35px] flex-1 items-start justify-end gap-[2px] border-t border-[#b0b0b0] pr-[5px] pt-[4px]">
            <svg width="13" height="13" viewBox="0 0 13 13"><path d="M5 .500h3v4.500h4.500v3H8v4.500H5V8H.500V5H5Z" fill="#7ba3d0" stroke="#6a7f96" strokeWidth=".8" /></svg>
            <svg width="6" height="4" viewBox="0 0 6 4" className="mt-[5px]"><path d="M0 0H6L3 3.500Z" fill="#5c5c5c" /></svg>
          </div>
        </div>
        <div className="flex flex-1 items-center pb-[6px] pl-[3px] pr-[2px] text-black">
          <span className="flex-1">Preselected: Unnamed.Model.Sketch_master.Constraint6 (195.085007,-103.245697,0.009000)</span>
          <svg width="10" height="15" viewBox="0 0 10 15" fill="none" stroke="#333" strokeWidth="1.200"><rect x=".7" y=".7" width="8.600" height="13.600" rx="3.800" /><path d="M5 4V7" /></svg>
          <span className="ml-[4px] text-[#31363b]">Blender</span><svg width="6" height="4" viewBox="0 0 6 4" className="mb-[3px] ml-[1px] mr-[11px]"><path d="M0 0H6L3 3.500Z" fill="#5c5c5c" /></svg>
          <span className="tracking-[-0.350px]">626.65 mm x 503.31 mm</span>
          <svg width="12" height="12" viewBox="0 0 12 12" className="ml-[12px] mt-[29px]"><path d="M10 1h1M7 4h1M10 4h1M4 7h1M7 7h1M10 7h1M1 10h1M4 10h1M7 10h1M10 10h1" stroke="#a8a8a8" /></svg>
        </div>
      </div>
    </div>
  );
}
